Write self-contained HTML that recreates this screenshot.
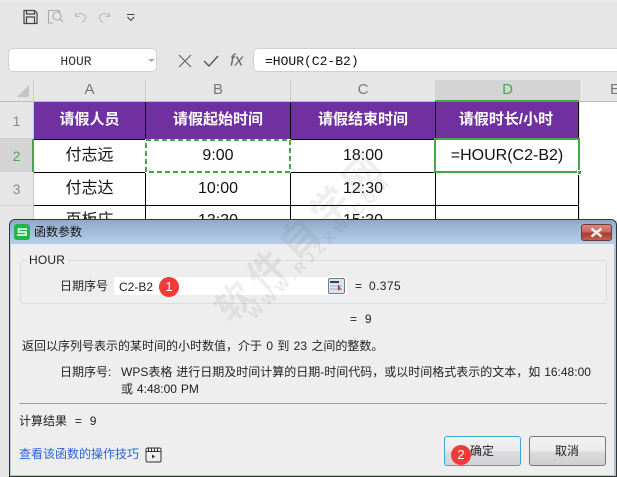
<!DOCTYPE html>
<html><head><meta charset="utf-8">
<style>
html,body{margin:0;padding:0}
#p{position:relative;width:617px;height:477px;overflow:hidden;background:#e6e6e6;font-family:"Liberation Sans","Noto Sans CJK SC",sans-serif;color:#111}
#p div{position:absolute;box-sizing:border-box}
.t{white-space:nowrap;line-height:1}
.c{text-align:center}
.h{color:#fff;font-weight:bold;font-size:15px;top:111px;line-height:17px;text-align:center}
.d{font-size:16px;line-height:18px;text-align:center;color:#111}
.ln{background:#000}
.ch{font-size:15px;color:#777;top:81px;line-height:18px;text-align:center}
.rh{font-size:14px;color:#888;left:0;width:33px;text-align:center;line-height:16px}
.s{font-size:12px;line-height:14px;white-space:nowrap;color:#222;word-spacing:.6px}
.wm{text-align:center;white-space:nowrap;transform:rotate(-45deg);transform-origin:50% 50%}
</style></head><body><div id="p">
<div style="left:0;top:0;width:617px;height:2px;background:#ececec"></div>
<svg style="position:absolute;left:0;top:0" width="150" height="34" fill="none">
<path d="M24 10.500h10.500l2.500 2.500v10.500H24z M26.500 10.500v3.500h8v-3.500 M26.500 23.500v-6.500h8v6.500" stroke="#444" stroke-width="1.200"/>
<path d="M48.500 10.500h11v3 M48.500 10.500v12.500h5" stroke="#aaa" stroke-width="1.100"/><circle cx="57" cy="16" r="4" stroke="#aaa" stroke-width="1.100"/><path d="M60 19l3 3" stroke="#aaa" stroke-width="1.100"/>
<path d="M75.500 12.500v4h4 M75.500 16.500c3-5 11-3 10 2c-.5 2-2 3-3.500 4" stroke="#bbb" stroke-width="1.100"/>
<path d="M109.500 12.500v4h-4 M109.500 16.500c-3-5-11-3-10 2c.5 2 2 3 3.500 4" stroke="#bbb" stroke-width="1.100"/>
<path d="M127 14.500h7.500 M127.500 17l3.300 3.500l3.300-3.500" stroke="#444" stroke-width="1.100"/>
</svg>
<div style="left:8px;top:48px;width:149px;height:24px;background:#fff;border:1px solid #d0d0d0;border-radius:5px"></div>
<div class="t c" style="left:8px;top:54px;width:136px;font:13px 'Liberation Mono',monospace;color:#333">HOUR</div>
<svg style="position:absolute;left:148px;top:58px" width="7" height="5"><path d="M0 1h7L3.500 4z" fill="#aaa"/></svg>
<svg style="position:absolute;left:175px;top:50px" width="75" height="22" fill="none">
<path d="M4 5l12 12M16 5L4 17" stroke="#666" stroke-width="1.200"/>
<path d="M29 11l5 5l9-10" stroke="#555" stroke-width="1.400"/>
<text x="55" y="15.500" font-family="Liberation Sans,sans-serif" font-style="italic" font-size="17" fill="#666">fx</text>
</svg>
<div style="left:253px;top:48px;width:364px;height:24px;background:#fff;border:1px solid #d0d0d0;border-right:0;border-radius:5px 0 0 5px"></div>
<div class="t" style="left:265px;top:54px;font:13px 'Liberation Mono',monospace;color:#111">=HOUR(C2-B2)</div>

<!-- headers -->
<div style="left:435px;top:80px;width:144px;height:22px;background:#d4d4d4"></div>
<div style="left:0;top:101px;width:617px;height:1px;background:#bcbcbc"></div>
<div style="left:33px;top:80px;width:1px;height:22px;background:#ccc"></div>
<div style="left:145px;top:80px;width:1px;height:22px;background:#ccc"></div>
<div style="left:290px;top:80px;width:1px;height:22px;background:#ccc"></div>
<div style="left:579px;top:80px;width:1px;height:22px;background:#ccc"></div>
<svg style="position:absolute;left:17px;top:85px" width="13" height="13"><path d="M12 0v12H0z" fill="#c4c4c4"/></svg>
<div class="ch" style="left:34px;width:111px">A</div>
<div class="ch" style="left:146px;width:144px">B</div>
<div class="ch" style="left:291px;width:144px">C</div>
<div class="ch" style="left:436px;width:143px;color:#4aa84f">D</div>
<div class="ch" style="left:605px;width:20px">E</div>
<div style="left:435px;top:100px;width:144px;height:2px;background:#44a748"></div>

<!-- row heads -->
<div style="left:33px;top:102px;width:1px;height:118px;background:#c8c8c8"></div>
<div style="left:0;top:139px;width:33px;height:33px;background:#d4d4d4"></div>
<div style="left:32px;top:139px;width:2px;height:33px;background:#44a748"></div>
<div style="left:0;top:138px;width:33px;height:1px;background:#d4d4d4"></div>
<div style="left:0;top:205px;width:33px;height:1px;background:#d4d4d4"></div>
<div class="rh" style="top:113px">1</div>
<div class="rh" style="top:148px;color:#4aa84f">2</div>
<div class="rh" style="top:181px">3</div>

<!-- sheet -->
<div style="left:34px;top:102px;width:545px;height:118px;background:#fff"></div>
<div style="left:580px;top:102px;width:37px;height:118px;background:#fff"></div>
<div style="left:34px;top:102px;width:545px;height:37px;background:#7030a0"></div>
<div class="ln" style="left:34px;top:139px;width:545px;height:1px"></div>
<div class="ln" style="left:34px;top:172px;width:545px;height:1px"></div>
<div class="ln" style="left:34px;top:205px;width:545px;height:1px"></div>
<div class="ln" style="left:145px;top:102px;width:1px;height:118px"></div>
<div class="ln" style="left:435px;top:102px;width:1px;height:118px"></div>
<div class="ln" style="left:578px;top:102px;width:1px;height:118px"></div>
<div class="ln" style="left:290px;top:102px;width:1px;height:118px"></div>
<div class="h" style="left:34px;width:111px">请假人员</div>
<div class="h" style="left:146px;width:144px">请假起始时间</div>
<div class="h" style="left:291px;width:144px">请假结束时间</div>
<div class="h" style="left:435px;width:142px">请假时长/小时</div>
<div class="d" style="left:34px;width:111px;top:147px">付志远</div>
<div class="d" style="left:34px;width:111px;top:180px">付志达</div>
<div class="d" style="left:34px;width:111px;top:212px">页板庄</div>
<div class="d" style="left:146px;width:144px;top:147px">9:00</div>
<div class="d" style="left:146px;width:144px;top:180px">10:00</div>
<div class="d" style="left:146px;width:144px;top:212px">13:30</div>
<div class="d" style="left:291px;width:144px;top:147px">18:00</div>
<div class="d" style="left:291px;width:144px;top:180px">12:30</div>
<div class="d" style="left:291px;width:144px;top:212px">15:30</div>
<div class="d" style="left:436px;width:142px;top:147px">=HOUR(C2-B2)</div>
<svg style="position:absolute;left:145px;top:139px" width="146" height="34" fill="none"><rect x="1" y="1" width="144" height="32" stroke="#fff" stroke-width="2"/><rect x="1" y="1" width="144" height="32" stroke="#44a748" stroke-width="2" stroke-dasharray="5 3"/></svg>
<div style="left:434px;top:138px;width:146px;height:35px;border:2px solid #44a748"></div>
<div style="left:577px;top:170px;width:5px;height:5px;background:#44a748;border:1px solid #fff"></div>

<!-- dialog -->
<div style="left:9px;top:219px;width:608px;height:258px;background:#a9c4dc;border:1px solid #333;border-radius:6px 6px 0 0"></div>
<div style="left:10px;top:220px;width:606px;height:24px;background:linear-gradient(#8eaac9,#b7cfe8);border-radius:5px 5px 0 0"></div>
<div style="left:11px;top:244px;width:603px;height:231px;background:#eee"></div>
<div style="left:14px;top:224px;width:16px;height:16px;background:#1fb64c;border-radius:3px"></div>
<svg style="position:absolute;left:14px;top:224px" width="16" height="16" fill="none"><path d="M13 5H4.500v3h7.500v3H3" stroke="#fff" stroke-width="1.600"/></svg>
<div class="t" style="left:34px;top:225px;font-size:12px;line-height:14px;color:#111">函数参数</div>
<div style="left:581px;top:224px;width:31px;height:17px;border:1px solid #6e3a3a;border-radius:3px;background:linear-gradient(#d9887c 0,#c66a5c 45%,#ab3a2c 55%,#c0604f 100%)"></div>
<svg style="position:absolute;left:589px;top:227px" width="15" height="11"><path d="M2.500 1.500l10 8M12.500 1.500l-10 8" stroke="#eee" stroke-width="2.600"/></svg>

<div style="left:20px;top:260px;width:587px;height:44px;border:1px solid #d6dee6;border-radius:3px"></div>
<div class="s" style="left:27px;top:253px;background:#eee;padding:0 2px;font-size:12px;height:14px;letter-spacing:.2px">HOUR</div>
<div class="s" style="left:60px;top:279px">日期序号</div>
<div style="left:114px;top:277px;width:233px;height:18px;background:#fff"></div>
<div class="s" style="left:119px;top:280px;font-size:12px">C2-B2</div>
<div style="left:328px;top:278px;width:17px;height:16px;border:1px solid #7a7a7a;border-radius:2px;background:#dce6f2"></div>
<svg style="position:absolute;left:330px;top:280px" width="14" height="12"><path d="M0 1h9v2H0z" fill="#2e3a80"/><path d="M0 6h12M0 9h12" stroke="#aab" stroke-width="1"/><path d="M8 4l0 7 2-2 2 2z" fill="#a04030"/></svg>
<div class="s" style="left:355px;top:279px;font-size:12px">=</div>
<div class="s" style="left:369px;top:279px;font-size:12px;letter-spacing:.4px">0.375</div>
<div class="s" style="left:350px;top:312px;font-size:12px">= &nbsp;9</div>

<div class="s" style="left:22px;top:339px;word-spacing:1px">返回以序列号表示的某时间的小时数值，介于 0 到 23 之间的整数。</div>
<div class="s" style="left:60px;top:365px">日期序号:</div>
<div class="s" style="left:121px;top:365px">WPS表格 进行日期及时间计算的日期-时间代码，或以时间格式表示的文本，如 16:48:00</div>
<div class="s" style="left:121px;top:382px">或 4:48:00 PM</div>
<div style="left:19px;top:403px;width:588px;height:1px;background:#a0a0a0"></div>
<div class="s" style="left:19px;top:414px;word-spacing:.6px">计算结果 &nbsp;= &nbsp;9</div>
<div class="s" style="left:19px;top:447px;color:#2a62d8">查看该函数的操作技巧</div>
<svg style="position:absolute;left:145px;top:447px" width="17" height="16" fill="none"><rect x="1" y="1" width="15" height="14" rx="1.500" stroke="#333"/><path d="M1 4.500h15" stroke="#333"/><path d="M3.500 1v3.500M6.500 1v3.500M9.500 1v3.500M12.500 1v3.500" stroke="#333"/><path d="M7 7.500v4l3-2z" fill="#333"/></svg>

<div style="left:444px;top:436px;width:77px;height:30px;border:1px solid #3aa7dd;border-radius:3px;background:linear-gradient(#f2f2f2 0,#ebebeb 50%,#dcdcdc 52%,#cfd4d8 100%)"></div>
<div class="s" style="left:470px;top:444px;font-size:12px">确定</div>
<div style="left:529px;top:436px;width:77px;height:30px;border:1px solid #777;border-radius:3px;background:linear-gradient(#f2f2f2 0,#ebebeb 50%,#dcdcdc 52%,#cfcfcf 100%)"></div>
<div class="s" style="left:555px;top:444px;font-size:12px">取消</div>

<div class="t c" style="left:159px;top:277px;width:20px;height:20px;border-radius:50%;background:#f33a3a;color:#fff;font-size:13px;line-height:20px">1</div>
<div class="t c" style="left:451px;top:445px;width:20px;height:20px;border-radius:50%;background:#f33a3a;color:#fff;font-size:13px;line-height:20px">2</div>

<!-- watermark -->
<div class="wm" style="left:182px;top:216px;width:240px;height:40px;font-size:37px;line-height:40px;letter-spacing:8px;color:rgba(110,110,110,.11);font-weight:bold">软件自学网</div>
<div class="wm" style="left:201px;top:239px;width:240px;height:18px;font-size:15px;line-height:18px;letter-spacing:4.500px;color:rgba(110,110,110,.13);font-weight:bold">WWW.RJZXW.COM</div>
</div></body></html>
